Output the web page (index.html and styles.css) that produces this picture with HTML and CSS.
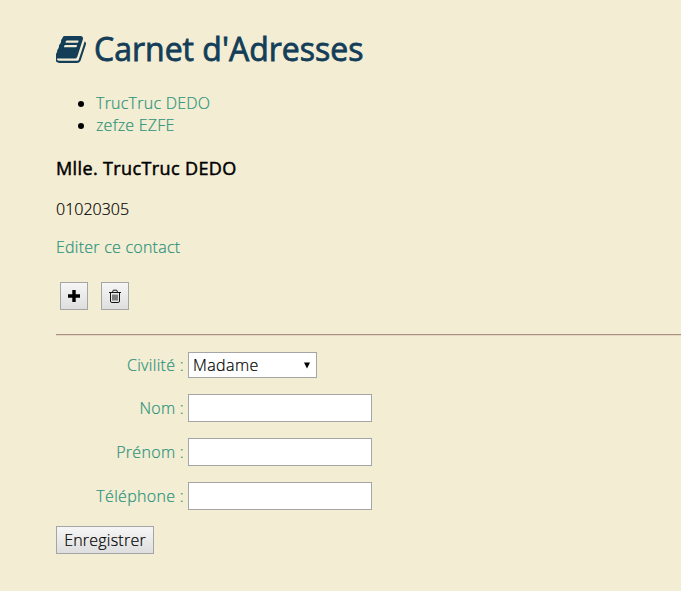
FILE: index.html
```html
<!DOCTYPE html>
<html lang="fr">
<head>
<meta charset="utf-8">
<title>Carnet d'Adresses</title>
<link rel="stylesheet" href="styles.css">
</head>
<body>
<h1><svg class="book" viewBox="64 128 1600 1536" preserveAspectRatio="none" aria-hidden="true"><path d="M1639 478q40 57 18 129l-275 906q-19 64-76.5 107.5t-122.5 43.5h-923q-77 0-148.5-53.5t-99.5-131.5q-24-67-2-127 0-4 3-27t4-37q1-8-3-21.5t-3-19.5q2-11 8-21t16.5-23.500 16.500-23.500q23-38 45-91.500t30-91.500q3-10 .5-30t-.5-28q3-11 17-28t17-23q21-36 42-92t25-90q1-9-2.500-32t.5-28q4-13 22-30.500t22-22.500q19-26 42.500-84.500t27.500-96.500q1-8-3-25.500t-2-26.500q2-8 9-18t18-23 17-21q8-12 16.500-30.500t15-35 16-36 19.500-32 26.500-23.500 36-11.500 47.500 5.500l-1 3q38-9 51-9h761q74 0 114 56t18 130l-274 906q-36 119-71.500 153.500t-128.500 34.500h-869q-27 0-38 15-11 16-1 43 24 70 144 70h923q29 0 56-15.500t35-41.500l300-987q7-22 5-57 38 15 59 43zm-1064 2q-4 13 2 22.500t20 9.500h608q13 0 25.500-9.500t16.500-22.500l21-64q4-13-2-22.500t-20-9.500h-608q-13 0-25.500 9.500t-16.500 22.500zm-83 256q-4 13 2 22.500t20 9.500h608q13 0 25.500-9.500t16.500-22.500l21-64q4-13-2-22.500t-20-9.500h-608q-13 0-25.500 9.500t-16.500 22.500z"/></svg><span>Carnet d'Adresses</span></h1>
<ul>
  <li><a>TrucTruc DEDO</a></li>
  <li><a>zefze EZFE</a></li>
</ul>
<h2>Mlle. TrucTruc DEDO</h2>
<p class="phone">01020305</p>
<p class="edit"><a>Editer ce contact</a></p>
<div class="actions">
  <button type="button" aria-label="Ajouter"><svg viewBox="0 0 12 12"><path d="M4.300 0h3.400v4.300H12v3.400H7.700V12H4.300V7.700H0V4.300h4.300z"/></svg></button>
  <button type="button" aria-label="Supprimer"><svg class="trash" viewBox="0 0 14 14"><path d="M1 3.500h12M4.500 3.200L5.300 1.200h3.400l.8 2M2.500 3.500v8.500q0 1.500 1.300 1.500h6.400q1.300 0 1.300-1.500V3.500M5 5.500v6M7 5.500v6M9 5.500v6"/></svg></button>
</div>
<hr>
<form>
  <div class="row"><label>Civilité :</label><div class="select"><span>Madame</span><svg viewBox="0 0 6 7"><path d="M0 0.500h6L3 6.500z"/></svg></div></div>
  <div class="row"><label for="nom">Nom :</label><input id="nom"></div>
  <div class="row"><label for="prenom">Prénom :</label><input id="prenom"></div>
  <div class="row"><label for="tel">Téléphone :</label><input id="tel"></div>
  <button class="save" type="button">Enregistrer</button>
</form>
</body>
</html>
```
FILE: styles.css
```css
* { box-sizing: border-box; }
html { background: #f3edd3; overflow: hidden; }
body { margin: 0 0 0 56px; padding-top: 27px; font: 300 16px/22px "Open Sans", sans-serif; color: #000; -webkit-text-stroke: 0.2px; }
h1 { display: flex; align-items: center; height: 44px; margin: 0; font-size: 32px; font-weight: 500; line-height: 44px; color: #143e58; letter-spacing: 0; white-space: nowrap; -webkit-text-stroke: 0.8px; }
.book { width: 30px; height: 27px; margin-right: 8px; fill: #143e58; }
ul { margin: 21px 0 0; padding-left: 40px; }
a, label { color: #2b927b; letter-spacing: 0.24px; }
h2 { margin: 19px 0 0; font-size: 18px; font-weight: 500; line-height: 26px; letter-spacing: 0.38px; -webkit-text-stroke: 0.5px; }
p { margin: 0; }
.phone { margin-top: 17px; }
.edit { margin-top: 16px; }
.actions { display: flex; gap: 13px; margin: 24px 0 0 4px; }
button { display: flex; align-items: center; justify-content: center; width: 28px; height: 28px; padding: 0; border: 1px solid #a5a5a5; border-radius: 0; background: linear-gradient(#f6f6f6, #dedede); color: #000; font: inherit; }
button svg { width: 12px; height: 12px; }
button .trash { width: 14px; height: 14px; fill: none; stroke: #111; stroke-width: 1; }
hr { height: 2px; margin: 24px 0 0; border: 0; border-top: 1px solid #a99185; border-bottom: 1px solid #e5d6c0; }
form { margin-top: 16px; }
.row { display: flex; align-items: center; margin-bottom: 16px; }
label { width: 128px; margin-right: 4px; text-align: right; letter-spacing: 0.32px; }
input, .select { border: 1px solid #a5a5a5; background: #fff; }
input { width: 184px; height: 28px; padding: 2px; font: inherit; }
.select { display: flex; align-items: center; justify-content: space-between; width: 129px; height: 26px; padding: 0 6px 0 4px; letter-spacing: 0.4px; }
.select svg { width: 6px; height: 7px; }
.save { width: 98px; letter-spacing: 0.22px; }
```
